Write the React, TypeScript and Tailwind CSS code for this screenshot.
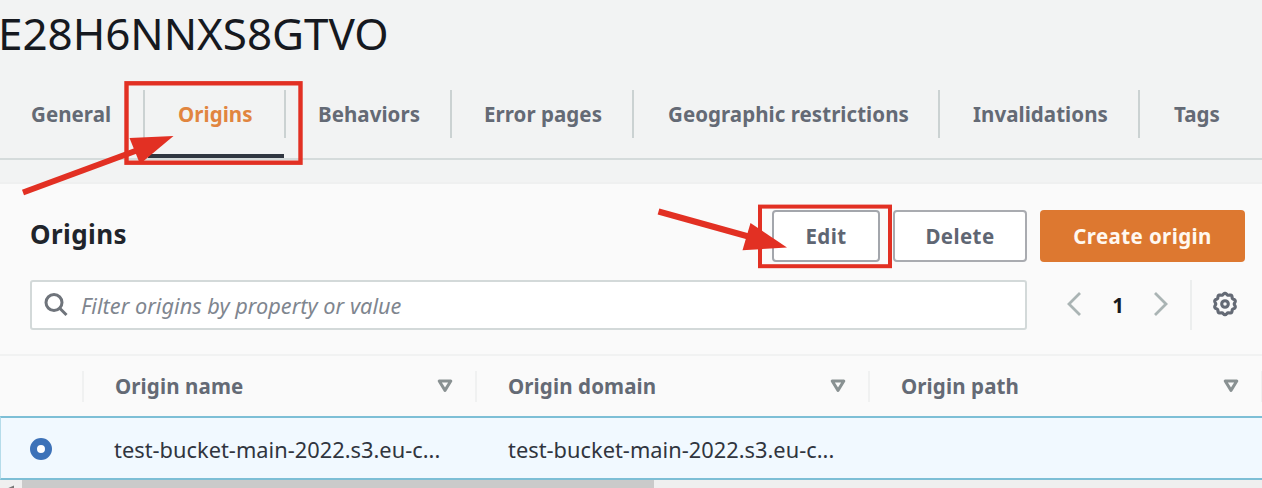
import type { ReactNode } from 'react';

function Tab({ label, width, active = false, last = false }: { label: string; width: string; active?: boolean; last?: boolean }) {
  return (
    <li className={`relative flex h-[48px] shrink-0 items-center text-[20.5px] font-bold tracking-[0.05px] ${width} ${active ? 'text-[#e1853f]' : 'text-[#646a75]'} ${last ? '' : 'border-r-2 border-[#cbd2d2]'}`}>
      <span className="whitespace-nowrap">{label}</span>
      {active && <span className="absolute top-[64px] left-[3px] h-[4px] w-[136px] bg-[#303640]" />}
    </li>
  );
}

function Button({ children, className }: { children: ReactNode; className: string }) {
  return (
    <button className={`flex h-[52px] items-center justify-center rounded-[4px] text-[20.5px] font-bold tracking-[0.4px] ${className}`}>
      {children}
    </button>
  );
}

function SortIcon() {
  return (
    <svg className="h-[14px] w-[16px]" viewBox="0 0 16 14" fill="none" stroke="#899192" strokeWidth="3" strokeLinejoin="round">
      <path d="M2.2 2h11.6L8 11.4z" />
    </svg>
  );
}

function HeaderCell({ label, className }: { label: string; className: string }) {
  return (
    <div className={`flex h-[31px] shrink-0 items-center justify-between border-l-2 border-[#f0f1f1] pl-[31px] pr-[22px] text-[20.5px] font-bold tracking-[0.12px] text-[#646a75] ${className}`}>
      <span>{label}</span>
      <SortIcon />
    </div>
  );
}

function GearIcon() {
  const points = Array.from({ length: 80 }, (_, i) => {
    const a = (i / 80) * Math.PI * 2;
    const r = 10 + 0.8 * Math.cos(a * 10);
    return `${(13 + r * Math.sin(a)).toFixed(2)},${(13 - r * Math.cos(a)).toFixed(2)}`;
  }).join(' ');
  return (
    <svg className="relative -top-px h-[26px] w-[26px]" viewBox="0 0 26 26" fill="none" stroke="#646a75" strokeWidth="3.1">
      <polygon points={points} strokeLinejoin="round" />
      <circle cx="13" cy="13" r="3.3" strokeWidth="3.1" />
    </svg>
  );
}

function Annotations() {
  return (
    <svg className="pointer-events-none absolute inset-0 h-[488px] w-[1262px]" viewBox="0 0 1262 488" fill="none" stroke="#e23023">
      <rect x="126.5" y="83.3" width="174" height="79.4" strokeWidth="4.4" />
      <path d="M23 192.5L138 150" strokeWidth="6" />
      <path d="M173.5 136L129.5 138L140 164z" fill="#e23023" stroke="none" />
      <rect x="760" y="206.6" width="130" height="59.6" strokeWidth="4" />
      <path d="M658.5 211.5L752 237.5" strokeWidth="6.4" />
      <path d="M787 247.5L750.5 223L742.5 250.3z" fill="#e23023" stroke="none" />
    </svg>
  );
}

export default function App() {
  return (
    <div className="relative flex h-[488px] w-[1262px] flex-col overflow-hidden bg-[#f2f3f3] font-['Noto_Sans',sans-serif]">
      <h1 className="-ml-[2px] h-[90px] w-[400px] pt-[3px] text-[44px] leading-[60px] tracking-[-0.05px] text-[#16191f]">E28H6NNXS8GTVO</h1>
      <ul className="flex h-[70px] shrink-0 border-b-2 border-[#d5dbdb]">
        <Tab label="General" width="w-[145px] pl-[31px]" />
        <Tab label="Origins" width="w-[141px] pl-[33px]" active />
        <Tab label="Behaviors" width="w-[166px] pl-[32px]" />
        <Tab label="Error pages" width="w-[182px] pl-[32px]" />
        <Tab label="Geographic restrictions" width="w-[306px] pl-[34px]" />
        <Tab label="Invalidations" width="w-[200px] pl-[33px]" />
        <Tab label="Tags" width="w-[122px] pl-[34px]" last />
      </ul>
      <section className="mt-[22px] flex flex-1 flex-col border-t-2 border-[#eff0f0] bg-[#fafafa]">
        <div className="flex h-[78px] shrink-0 items-end pr-[17px] pl-[30px]">
          <h2 className="mb-[10px] text-[26px] leading-[36px] font-bold tracking-[0.4px] text-[#20242b]">Origins</h2>
          <Button className="ml-auto w-[108px] border-2 border-[#a3a6ac] bg-white text-[#5f6673]">Edit</Button>
          <Button className="ml-[13px] w-[134px] border-2 border-[#a9abb0] bg-white text-[#5f6673]">Delete</Button>
          <Button className="ml-[13px] w-[205px] bg-[#dd7830] text-[#fff8f0]">Create origin</Button>
        </div>
        <div className="mt-[18px] flex h-[50px] shrink-0 items-center pl-[30px]">
          <div className="flex h-[50px] w-[997px] items-center rounded-[3px] border-2 border-[#d3d9d9] bg-white pl-[11px]">
            <svg className="h-[26px] w-[26px]" viewBox="0 0 26 26" fill="none" stroke="#6f747b" strokeWidth="3">
              <circle cx="11" cy="10.5" r="8" />
              <path d="M16.5 16L23.5 23" />
            </svg>
            <span className="ml-[12px] pt-[2px] text-[21.7px] tracking-[0.02px] text-[#7f868f] italic">Filter origins by property or value</span>
          </div>
          <svg className="ml-[39px] h-[26px] w-[16px]" viewBox="0 0 16 26" fill="none" stroke="#aab4b4" strokeWidth="2.8">
            <path d="M14 1L3 12L14 23" />
          </svg>
          <span className="ml-[27px] w-[18px] text-center text-[20.5px] font-bold text-[#16191f]">1</span>
          <svg className="ml-[26px] h-[26px] w-[16px]" viewBox="0 0 16 26" fill="none" stroke="#aab4b4" strokeWidth="2.8">
            <path d="M2 1L13 12L2 23" />
          </svg>
          <span className="ml-[21px] mr-[20px] h-[50px] w-[2px] bg-[#eceeee]" />
          <GearIcon />
        </div>
        <div className="mt-[24px] flex h-[62px] shrink-0 items-center border-t-2 border-[#f1f2f2] pl-[82px]">
          <HeaderCell label="Origin name" className="w-[393px]" />
          <HeaderCell label="Origin domain" className="w-[393px]" />
          <HeaderCell label="Origin path" className="w-[393px]" />
          <span className="h-[31px] w-[2px] shrink-0 bg-[#f0f1f1]" />
        </div>
        <div className="flex h-[64px] shrink-0 items-center border-y-2 border-l border-y-[#7dbfd6] border-l-[#b5dcea] bg-[#f1f9ff] pt-[2px] pl-[29px]">
          <span className="h-[22px] w-[22px] rounded-full border-[7px] border-[#3d72b8] bg-white" />
          <span className="ml-[62px] w-[394px] pt-[2px] text-[21.8px] tracking-[0.02px] text-[#30353e]">test-bucket-main-2022.s3.eu-c...</span>
          <span className="pt-[2px] text-[21.8px] tracking-[0.02px] text-[#30353e]">test-bucket-main-2022.s3.eu-c...</span>
        </div>
        <div className="flex h-[8px] shrink-0 overflow-hidden bg-[#efefef]">
          <span className="w-[22px]">
            <svg className="h-[8px] w-[22px]" viewBox="0 0 22 8">
              <path d="M6 9L14 5.5V9z" fill="#777" />
            </svg>
          </span>
          <span className="w-[632px] bg-[#cacaca]" />
        </div>
      </section>
      <Annotations />
    </div>
  );
}
